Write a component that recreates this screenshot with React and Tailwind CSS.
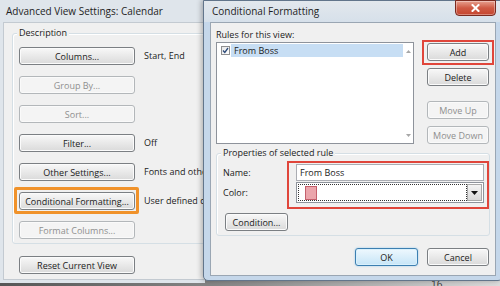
import React from "react";

const FONT = "font-['Open_Sans',sans-serif]";

function Btn({ children, disabled, def, className = "" }) {
  let look =
    "border-[#7b7f83] bg-linear-to-b from-[#f8f8f8] to-[#dadada] text-[#1b1b1b] shadow-[inset_0_0_0_1px_#fbfbfb]";
  if (disabled)
    look = "border-[#b3b7ba] bg-[#f4f4f4] text-[#8f8f8f] shadow-[inset_0_0_0_1px_#fafafa]";
  if (def)
    look =
      "border-[#3c7fb1] bg-linear-to-b from-[#eef8fe] to-[#c6e5f7] text-[#1b1b1b] shadow-[inset_0_0_0_1px_#d9f0fc,0_0_2px_#8fc4ea]";
  return (
    <div
      className={`shrink-0 flex items-center justify-center h-[18px] rounded-[3px] border text-[9px] leading-none whitespace-nowrap ${look} ${className}`}
    >
      {children}
    </div>
  );
}

function LeftRow({ label, note, disabled }) {
  return (
    <div className="flex items-center">
      <Btn disabled={disabled} className="w-[116px]">
        {label}
      </Btn>
      {note && (
        <span className="ml-[9px] text-[9px] text-[#1b1b1b] whitespace-nowrap">{note}</span>
      )}
    </div>
  );
}

function LeftWindow() {
  return (
    <div className="absolute left-0 top-0 w-[205px] h-[283px] overflow-hidden bg-[#dfe5eb] flex flex-col">
      <div className="h-[22px] pl-[6px] flex items-center text-[10px] text-[#1e1e1e] whitespace-nowrap">
        Advanced View Settings: Calendar
      </div>
      <div className="relative ml-[3px] mb-[3px] w-[260px] flex-1 bg-[#f0f0f0] border border-[#c3cad1] pt-[10px] pl-[8px]">
        <div className="relative w-[240px] border border-[#d5dfe5] rounded-[3px] shadow-[inset_1px_1px_0_#ffffff] pt-[13px] pl-[6px] pb-[4px] flex flex-col gap-[11px]">
          <span className="absolute left-[4px] top-[-8px] px-[2px] bg-[#f0f0f0] leading-[14px] text-[9px] text-[#1b1b1b]">
            Description
          </span>
          <LeftRow label="Columns..." note="Start, End" />
          <LeftRow label="Group By..." disabled />
          <LeftRow label="Sort..." disabled />
          <LeftRow label="Filter..." note="Off" />
          <LeftRow label="Other Settings..." note="Fonts and other" />
          <LeftRow label="Conditional Formatting..." note="User defined co" />
          <LeftRow label="Format Columns..." disabled />
        </div>
        <div className="mt-[12px] ml-[7px]">
          <Btn className="w-[116px]">Reset Current View</Btn>
        </div>
      </div>
      <div className="absolute left-[14px] top-[187px] w-[125px] h-[27px] border-[3px] border-[#f0922a] rounded-[2px]" />
    </div>
  );
}

function RightWindow() {
  return (
    <div className="absolute left-[203px] top-0 w-[300px] h-[281px] bg-[#c5d7ea] border border-[#62758b] rounded-b-[5px] flex flex-col shadow-[-2px_0_5px_rgba(0,0,0,0.25)]">
      <div className="h-[21px] pl-[8px] flex items-center text-[10px] text-[#1e1e1e] bg-linear-to-b from-[#e3e8ed] to-[#d6e0ea]">
        Conditional Formatting
      </div>
      <div className="absolute left-[251px] top-[-1px] w-[41px] h-[16px] rounded-b-[4px] border border-[#7a2a1f] bg-linear-to-b from-[#e7a08f] via-[#cf5a44] to-[#c5452e] flex items-center justify-center shadow-[inset_0_0_0_1px_rgba(255,255,255,0.35)]">
        <svg width="9" height="8" viewBox="0 0 9 8">
          <path d="M1.5 1 L7.5 7 M7.5 1 L1.5 7" stroke="#ffffff" strokeWidth="2" strokeLinecap="square" />
        </svg>
      </div>

      <div className="ml-[6px] mr-[6px] h-[254px] bg-[#f0f0f0] border border-[#9aa6b3] pt-[5px] pl-[5px] flex flex-col">
        <div className="flex">
          <div className="flex flex-col shrink-0">
            <div className="h-[14px] leading-[14px] text-[9px] text-[#1b1b1b]">Rules for this view:</div>
            <div className="w-[198px] h-[102px] bg-white border border-[#8e939b] flex">
              <div className="flex-1 pt-[1px]">
                <div className="flex items-center h-[13px]">
                  <div className="shrink-0 ml-[4px] w-[9px] h-[9px] border border-[#8f8f8f] bg-linear-to-br from-[#e8e8e8] to-[#ffffff] flex items-center justify-center">
                    <svg width="7" height="7" viewBox="0 0 7 7">
                      <path d="M1 3.5 L2.8 5.5 L6 1" stroke="#2c4a78" strokeWidth="1.3" fill="none" />
                    </svg>
                  </div>
                  <div className="ml-[1px] flex-1 h-[13px] bg-[#c7def4] pl-[3px] flex items-center text-[9px] text-[#1b1b1b]">
                    From Boss
                  </div>
                </div>
              </div>
              <div className="shrink-0 w-[10px] flex flex-col items-center justify-between pt-[7px] pb-[6px]">
                <svg width="5" height="3" viewBox="0 0 5 3">
                  <path d="M0 3 L2.5 0 L5 3 Z" fill="#a7a7a7" />
                </svg>
                <svg width="5" height="3" viewBox="0 0 5 3">
                  <path d="M0 0 L2.5 3 L5 0 Z" fill="#a7a7a7" />
                </svg>
              </div>
            </div>
          </div>
          <div className="ml-[13px] pt-[15px] flex flex-col shrink-0">
            <Btn className="w-[62px]">Add</Btn>
            <Btn className="w-[62px] mt-[7px]">Delete</Btn>
            <Btn disabled className="w-[62px] mt-[15px]">Move Up</Btn>
            <Btn disabled className="w-[62px] mt-[7px]">Move Down</Btn>
          </div>
        </div>

        <div className="relative shrink-0 mt-[9px] w-[274px] h-[83px] border border-[#d5dfe5] rounded-[3px] shadow-[inset_1px_1px_0_#ffffff] pt-[10px] flex flex-col">
          <span className="absolute left-[4px] top-[-8px] px-[2px] bg-[#f0f0f0] leading-[14px] text-[9px] text-[#1b1b1b]">
            Properties of selected rule
          </span>
          <div className="flex items-center">
            <span className="shrink-0 w-[79px] pl-[6px] text-[9px] text-[#1b1b1b]">Name:</span>
            <div className="shrink-0 w-[188px] h-[17px] bg-white border border-[#abadb3] flex items-center pl-[3px] text-[9px] text-[#1b1b1b]">
              From Boss
            </div>
          </div>
          <div className="flex items-center mt-[1px]">
            <span className="shrink-0 w-[79px] pl-[6px] text-[9px] text-[#1b1b1b]">Color:</span>
            <div className="shrink-0 w-[188px] h-[21px] bg-white border border-[#8e939b] flex items-center p-[1px]">
              <div className="flex-1 h-full border border-dotted border-[#333333] flex items-center pl-[6px]">
                <div className="w-[12px] h-[14px] bg-[#eba5ab] border border-[#c4606c]" />
              </div>
              <div className="shrink-0 w-[15px] h-full border border-[#a9a9a9] bg-linear-to-b from-[#f4f4f4] to-[#d8d8d8] flex items-center justify-center">
                <svg width="7" height="4" viewBox="0 0 7 4">
                  <path d="M0 0 L3.5 4 L7 0 Z" fill="#111111" />
                </svg>
              </div>
            </div>
          </div>
          <div className="mt-[10px] ml-[8px]">
            <Btn className="w-[63px]">Condition...</Btn>
          </div>
        </div>

        <div className="mt-[12px] flex justify-end pr-[6px] gap-[9px]">
          <Btn def className="w-[63px]">OK</Btn>
          <Btn className="w-[62px]">Cancel</Btn>
        </div>
      </div>

      <div className="absolute left-[218px] top-[39px] w-[72px] h-[25px] border-2 border-[#e0463b]" />
      <div className="absolute left-[83px] top-[160px] w-[202px] h-[48px] border-2 border-[#e0463b]" />
    </div>
  );
}

export default function App() {
  return (
    <div
      className={`relative w-[500px] h-[286px] overflow-hidden bg-linear-to-r from-[#565656] via-[#8e8e8e] to-[#dcdcdc] ${FONT}`}
    >
      <span className="absolute left-[431px] top-[279px] text-[10px] leading-none text-[#333333]">16</span>
      <LeftWindow />
      <RightWindow />
    </div>
  );
}
